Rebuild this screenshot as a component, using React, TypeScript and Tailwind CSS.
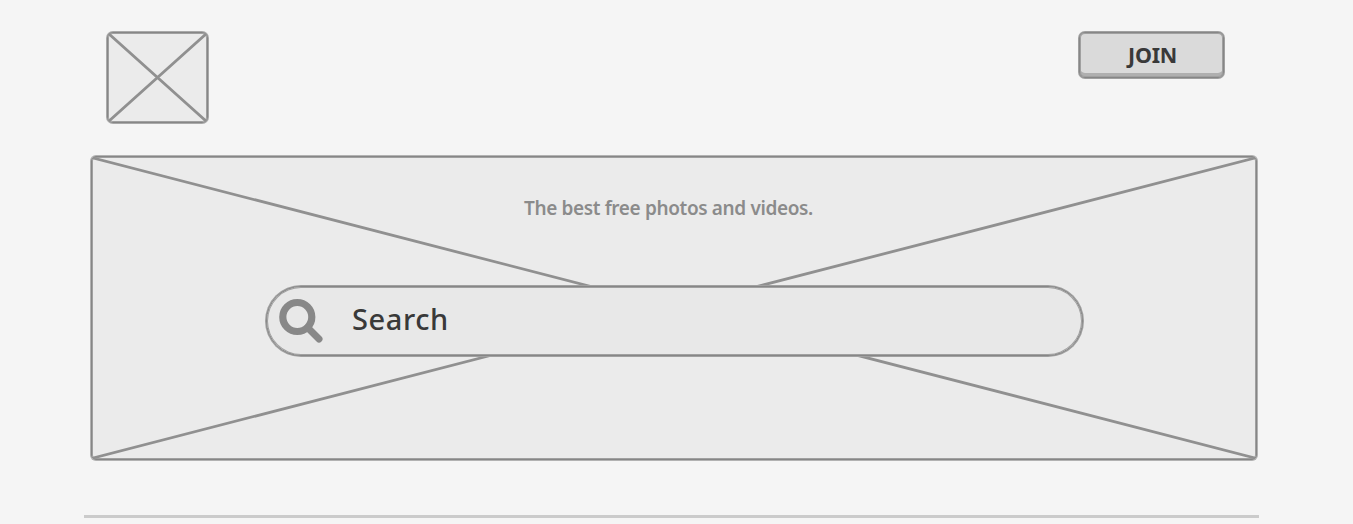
function Cross({ width, height }: { width: number; height: number }) {
  return (
    <svg className="block h-full w-full" viewBox={`0 0 ${width} ${height}`} preserveAspectRatio="none" fill="none" stroke="#909090" strokeWidth="2.8" aria-hidden="true">
      <path d={`M1 1L${width - 1} ${height - 1}M${width - 1} 1L1 ${height - 1}`} />
    </svg>
  );
}

export default function App() {
  return (
    <div className="flex h-[524px] w-[1353px] flex-col overflow-hidden bg-[#f5f5f5] pt-[31px] font-['Noto_Sans','Open_Sans',sans-serif]">
      <header className="flex items-start justify-between pr-[128px] pl-[106px]">
        <div className="m-px h-[91px] w-[101px] rounded-[6px] border border-[#868686] bg-[#ebebeb] shadow-[0_0_0_1px_#a9a9a9,inset_0_0_0_1px_#a0a0a0]">
          <Cross width={99} height={89} />
        </div>
        <button className="m-px flex h-[46px] w-[145px] items-center justify-center rounded-[6px] border border-[#868686] bg-[#dadada] pl-[2px] text-[21.5px] font-bold tracking-[-0.3px] text-[#393939] shadow-[0_0_0_1px_#a0a0a0,inset_0_0_0_1px_#a0a0a0,inset_0_-4px_0_#afafaf]">
          JOIN
        </button>
      </header>
      <main className="mt-[32px] ml-[91px] grid h-[304px] w-[1166px] rounded-[5px] border border-[#868686] bg-[#ebebeb] shadow-[0_0_0_1px_#b2b2b2,inset_0_0_0_1px_#a0a0a0]">
        <div className="col-start-1 row-start-1 h-[302px]">
          <Cross width={1164} height={302} />
        </div>
        <div className="z-10 col-start-1 row-start-1 flex flex-col">
          <h1 className="mt-[36px] ml-[432px] h-[30px] text-[19px] leading-[30px] font-semibold tracking-[-0.37px] whitespace-nowrap text-[#8b8b8b]">The best free photos and videos.</h1>
          <label className="mt-[63px] ml-[174px] flex h-[70px] w-[817px] items-center rounded-[35px] border border-[#868686] bg-[#e8e8e8] pl-[12px] shadow-[0_0_0_1px_#a0a0a0,inset_0_0_0_1px_#a0a0a0]">
            <svg width="46" height="46" viewBox="0 0 46 46" fill="none" stroke="#888888" aria-hidden="true">
              <circle cx="18.3" cy="19" r="14.5" strokeWidth="7.2" />
              <path d="M29 30L40 41" strokeWidth="7" strokeLinecap="round" />
            </svg>
            <span className="ml-[27px] pb-[5px] text-[29px] leading-none font-medium tracking-[0.6px] text-[#393939]">Search</span>
          </label>
        </div>
      </main>
      <hr className="mt-[55px] ml-[84px] h-[3px] w-[1175px] border-0 bg-[#cbcbcb]" />
    </div>
  );
}
